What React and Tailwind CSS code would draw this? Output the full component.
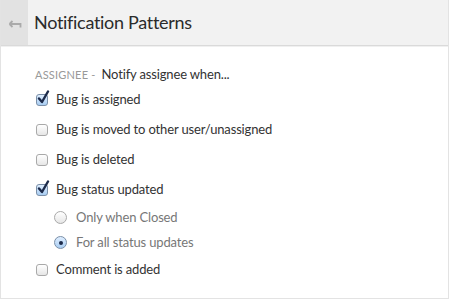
import React from 'react';

const Checkbox = ({ checked }) => (
    <span className="relative inline-block w-[12px] h-[12px] shrink-0">
        <span
            className={
                checked
                    ? 'absolute inset-0 rounded-[3px] border border-[#7a8fa8] bg-gradient-to-b from-[#dfeeff] to-[#a9cdf2]'
                    : 'absolute inset-0 rounded-[3px] border border-[#a9a9a9] bg-gradient-to-b from-[#ffffff] to-[#e6e6e6]'
            }
        />
        {checked && (
            <svg className="absolute left-[1px] top-[-4px]" width="13" height="14" viewBox="0 0 13 14">
                <path d="M2 8.5 L5 12 L11 1.5" fill="none" stroke="#1c2a4a" strokeWidth="2.4" strokeLinecap="round" strokeLinejoin="round" />
            </svg>
        )}
    </span>
);

const Radio = ({ checked }) => (
    <span
        className={
            checked
                ? 'relative inline-flex items-center justify-center w-[13px] h-[13px] rounded-full border border-[#7a8fa8] bg-gradient-to-b from-[#dfeeff] to-[#a9cdf2] shrink-0'
                : 'relative inline-flex items-center justify-center w-[13px] h-[13px] rounded-full border border-[#a9a9a9] bg-gradient-to-b from-[#ffffff] to-[#e6e6e6] shrink-0'
        }
    >
        {checked && <span className="w-[4px] h-[4px] rounded-full bg-[#1c2a4a]" />}
    </span>
);

const Row = ({ checked, children }) => (
    <div className="flex items-center h-[30px] gap-[8px] pl-[1px]">
        <Checkbox checked={checked} />
        <span className="text-[13px] tracking-[-0.15px] text-[#333]">{children}</span>
    </div>
);

const RadioRow = ({ checked, children }) => (
    <div className="flex items-center h-[25px] gap-[9px] pl-[19px]">
        <Radio checked={checked} />
        <span className="text-[13px] tracking-[-0.15px] text-[#777]">{children}</span>
    </div>
);

export default function App() {
    return (
        <div className="w-[450px] h-[300px] bg-white" style={{ fontFamily: 'Lato, "Liberation Sans", sans-serif' }}>
            <div className="w-[449px] h-[299px] border-l border-r border-b border-[#e3e3e3] flex flex-col">
                {/* Header */}
                <div className="flex h-[46px] bg-[#f2f2f2] border-b border-[#dadada] shadow-[0_1px_0_#f0f0f0] shrink-0">
                    <div className="w-[27px] bg-[#e2e2e2] flex items-center justify-center">
                        <svg width="14" height="9" viewBox="0 0 14 9" className="mt-[3px]">
                            <path d="M1.5 4 H12.5 V7.5 M1.5 4 L4.5 1 M1.5 4 L4.5 7" fill="none" stroke="#aaaaaa" strokeWidth="1.8" />
                        </svg>
                    </div>
                    <div className="flex items-center pl-[6px] text-[18px] tracking-[-0.3px] text-[#2b2b2b]">Notification Patterns</div>
                </div>

                {/* Body */}
                <div className="pl-[34px] pt-[19px]">
                    <div className="flex items-baseline h-[18px]">
                        <span className="text-[11px] text-[#999] tracking-[0.2px]">ASSIGNEE -</span>
                        <span className="text-[13px] tracking-[-0.15px] text-[#333] ml-[6px]">Notify assignee when...</span>
                    </div>
                    <div className="mt-[2px]">
                        <Row checked>Bug is assigned</Row>
                        <Row>Bug is moved to other user/unassigned</Row>
                        <Row>Bug is deleted</Row>
                        <Row checked>Bug status updated</Row>
                        <RadioRow>Only when Closed</RadioRow>
                        <RadioRow checked>For all status updates</RadioRow>
                        <Row>Comment is added</Row>
                    </div>
                </div>
            </div>
        </div>
    );
}
